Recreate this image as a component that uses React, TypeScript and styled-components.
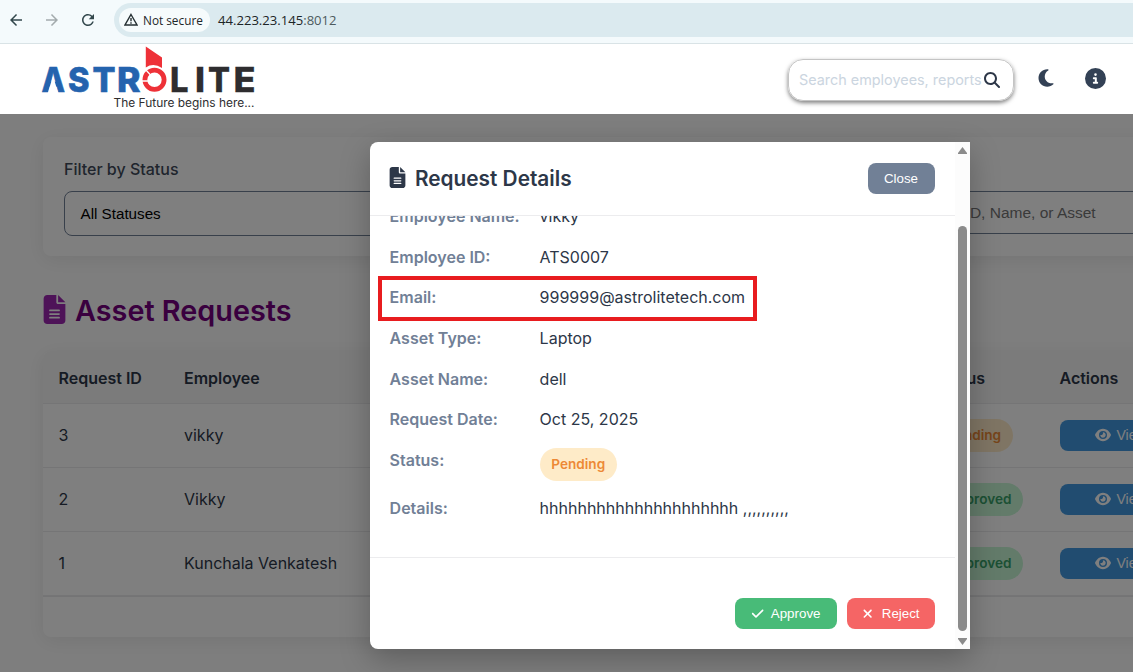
import React from "react";
import styled, { createGlobalStyle } from "styled-components";
import {
  FaCheck,
  FaCircleInfo,
  FaEye,
  FaFileLines,
  FaMagnifyingGlass,
  FaMoon,
  FaXmark,
} from "react-icons/fa6";
import { MdArrowBack, MdArrowForward, MdRefresh } from "react-icons/md";

const GlobalStyle = createGlobalStyle`
  * { box-sizing: border-box; }
  body {
    margin: 0;
    overflow: hidden;
    background: #f7fafc;
    color: #2d3748;
    font: 16px/1.6 Inter, sans-serif;
  }
`;

const Window = styled.div`
  position: relative;
  width: 1133px;
  height: 672px;
  overflow: hidden;
  background: #fdfdfd;
`;

const BrowserBar = styled.div`
  display: flex;
  align-items: center;
  height: 44px;
  padding: 0 0 4px 7px;
  background: #f4fafc;
  border-bottom: 1px solid #d9e3e6;
  color: #32474c;
`;

const NavIcon = styled.span<{ $dim?: boolean }>`
  display: flex;
  justify-content: center;
  width: 18px;
  margin-right: 18px;
  color: ${(p) => (p.$dim ? "#a3abad" : "#32474c")};
`;

const AddressBar = styled.div`
  display: flex;
  align-items: center;
  flex: 1;
  height: 34px;
  margin-left: -1px;
  padding-left: 5px;
  border-radius: 17px 0 0 17px;
  background: #dbeaef;
`;

const Security = styled.div`
  display: flex;
  align-items: center;
  gap: 5px;
  width: 91px;
  height: 24px;
  padding-left: 5px;
  border-radius: 12px;
  background: #f6fbfc;
  color: #1d2628;
  font: 500 11.8px/24px "Open Sans", sans-serif;
  white-space: nowrap;
`;

const Url = styled.span`
  margin-left: 8px;
  color: #1c2426;
  font: 13.1px/24px "Open Sans", sans-serif;
  span { color: #4d5a5d; }
`;

const Header = styled.header`
  display: flex;
  align-items: flex-start;
  width: 1133px;
  height: 70px;
  padding-left: 40px;
  background: #fff;
`;

const SearchBox = styled.div`
  display: flex;
  align-items: center;
  width: 226px;
  height: 42px;
  margin: 15px 22px 0 auto;
  padding: 0 0 0 10px;
  border: 1px solid #c4c4c4;
  border-radius: 15px;
  box-shadow: 0 2px 4px rgba(0, 0, 0, 0.5);
  color: #2d3748;
  font-size: 14.4px;
  svg { flex: none; margin: 0 0 1px 2px; }
`;

const Placeholder = styled.span`
  width: 183px;
  color: #cbd5e0;
  white-space: nowrap;
`;

const HeaderIcon = styled.span<{ $end: number }>`
  display: flex;
  height: 22px;
  margin: 23px ${(p) => p.$end}px 0 0;
  align-items: center;
  color: #334155;
`;

const Page = styled.main`
  display: flex;
  flex-direction: column;
  width: 1340px;
  padding: 23px 43px 0;
`;

const Card = styled.section`
  border-radius: 8px;
  background: #fff;
  box-shadow: 0 4px 20px rgba(0, 0, 0, 0.08);
`;

const FilterCard = styled(Card)`
  display: flex;
  justify-content: space-between;
  height: 119px;
  padding: 19px 21px;
`;

const Field = styled.div<{ $width: number }>`
  width: ${(p) => p.$width}px;
`;

const FieldLabel = styled.div`
  height: 35px;
  color: #3f4a5a;
  font-weight: 500;
  line-height: 26px;
`;

const Control = styled.div<{ $height: number; $color: string; $size: number }>`
  height: ${(p) => p.$height}px;
  padding-left: 15.5px;
  border: 1px solid #718096;
  border-radius: 8px;
  color: ${(p) => p.$color};
  font: ${(p) => p.$size}px/${(p) => p.$height - 2}px "Liberation Sans", Arial, sans-serif;
`;

const Title = styled.h1`
  display: flex;
  align-items: center;
  height: 48px;
  margin: 31px 0 16px;
  color: #74007e;
  font-size: 28.8px;
  font-weight: 600;
  svg { margin: -4px 6px 0 -3px; color: #9c27b0; }
`;

const TableCard = styled(Card)`
  height: 286px;
  overflow: hidden;
`;

const Row = styled.div<{ $head?: boolean }>`
  display: grid;
  grid-template-columns: 125.5px 751.5px 124px 140px;
  align-items: center;
  height: ${(p) => (p.$head ? 53 : 64)}px;
  padding: ${(p) => (p.$head ? 3 : 0)}px 0 0 15.5px;
  border-bottom: 1px solid #ebebec;
  background: ${(p) => (p.$head ? "#f7f7f7" : "#fff")};
  font-weight: ${(p) => (p.$head ? 600 : 400)};
`;

const TableEnd = styled.div`
  border-bottom: 1px solid #e8e8ea;
`;

const Badge = styled.span<{ $approved?: boolean }>`
  display: inline-block;
  height: 33px;
  padding: 0 11.7px;
  border-radius: 17px;
  background: ${(p) => (p.$approved ? "#c6f6d5" : "#feebc8")};
  color: ${(p) => (p.$approved ? "#38a169" : "#ed8936")};
  font-size: 13.6px;
  font-weight: 600;
  line-height: 33px;
`;

const Button = styled.button<{ $bg: string; $width: number }>`
  display: flex;
  align-items: center;
  justify-content: center;
  gap: 7px;
  width: ${(p) => p.$width}px;
  height: 31px;
  padding: 0 1px 0 0;
  border: 0;
  border-radius: 8px;
  background: ${(p) => p.$bg};
  color: #fff;
  font: 13.333px "Liberation Sans", Arial, sans-serif;
`;

const ViewButton = styled(Button)`
  gap: 5px;
  padding: 0 0 1px;
  font-size: 14px;
  line-height: 1;
`;

const Overlay = styled.div`
  position: absolute;
  top: 114px;
  left: 0;
  display: flex;
  justify-content: center;
  align-items: flex-start;
  width: 1340px;
  height: 558px;
  padding-top: 28px;
  background: rgba(0, 0, 0, 0.5);
`;

const Modal = styled.div`
  position: relative;
  display: flex;
  width: 600px;
  height: 507px;
  border-radius: 8px 0 0 8px;
  background: #fff;
  box-shadow: 0 10px 30px rgba(0, 0, 0, 0.25);
`;

const ModalMain = styled.div`
  display: flex;
  flex-direction: column;
  width: 585px;
`;

const ModalHeader = styled.div`
  display: flex;
  align-items: center;
  justify-content: space-between;
  height: 74px;
  padding: 0 20px;
  border-bottom: 1px solid #ececee;
`;

const ModalTitle = styled.h2`
  display: flex;
  align-items: center;
  gap: 7px;
  margin: 1px 0 0 -3px;
  font-size: 20.8px;
  font-weight: 600;
  svg { margin-top: -3px; }
`;

const ModalBody = styled.div`
  height: 342px;
  padding: 0 19.6px;
  overflow: hidden;
  border-bottom: 1px solid #ececee;
`;

const Details = styled.div`
  display: flex;
  flex-direction: column;
  gap: 15px;
  margin-top: -11.8px;
`;

const Detail = styled.div`
  display: flex;
  align-items: flex-start;
`;

const DetailLabel = styled.span`
  width: 150px;
  color: #718096;
  font-weight: 600;
`;

const ModalFooter = styled.div`
  display: flex;
  justify-content: flex-end;
  gap: 10px;
  padding: 40px 20px 0;
`;

const Scrollbar = styled.div`
  display: flex;
  flex-direction: column;
  align-items: center;
  width: 15px;
  padding: 5px 0 3px;
  background: #fcfcfc;
`;

const Thumb = styled.div`
  width: 9px;
  height: 405px;
  margin: 72px 0 7px;
  border-radius: 5px;
  background: #8b8b8b;
`;

const Highlight = styled.div`
  position: absolute;
  top: 134px;
  left: 8px;
  width: 379px;
  height: 45px;
  border: 4px solid #e81c1f;
`;

const Logo = () => (
  <svg width="216" height="70" viewBox="40 44 216 70" fontFamily="Inter, sans-serif">
    <g fontSize="34.4" fontWeight="800">
      <g fill="#2463ae" stroke="#2463ae" strokeWidth="0.6">
        <text x="41.500" y="92" textLength="23.500" lengthAdjust="spacingAndGlyphs">A</text>
        <path d="M53 76L47.800 93H58.200Z" fill="#fff" stroke="none" />
        <text x="68" y="92" textLength="21.500" lengthAdjust="spacingAndGlyphs">S</text>
        <text x="92.500" y="92" textLength="23" lengthAdjust="spacingAndGlyphs">T</text>
        <text x="117" y="92" textLength="23.500" lengthAdjust="spacingAndGlyphs">R</text>
      </g>
      <path d="M145.800 46.500L162 57.500V68Q153.500 62.500 145.800 67.500Z" fill="#ee3138" />
      <circle cx="154.500" cy="79.800" r="9.600" fill="none" stroke="#ee3138" strokeWidth="4.800" />
      <path d="M141 81H150M145 69L151.500 76" stroke="#fff" strokeWidth="1.300" />
      <g fill="#2e2d2f" stroke="#2e2d2f" strokeWidth="0.3">
        <text x="170" y="92" textLength="18.500" lengthAdjust="spacingAndGlyphs">L</text>
        <text x="195" y="92" textLength="10" lengthAdjust="spacingAndGlyphs">I</text>
        <text x="208" y="92" textLength="22" lengthAdjust="spacingAndGlyphs">T</text>
        <text x="233.500" y="92" textLength="22" lengthAdjust="spacingAndGlyphs">E</text>
      </g>
    </g>
    <text x="113.500" y="106.500" fontSize="11.500" fill="#2e2d2f" textLength="141" lengthAdjust="spacingAndGlyphs">
      The Future begins here...
    </text>
  </svg>
);

const WarningIcon = () => (
  <svg width="14" height="13" viewBox="0 0 14 13" fill="none" stroke="#263033" strokeWidth="1.4">
    <path d="M7 1.500L13 12H1Z" />
    <path d="M7 5V8.300M7 9.300V10.700" />
  </svg>
);

const requests = [
  { id: "3", employee: "vikky", approved: false },
  { id: "2", employee: "Vikky", approved: true },
  { id: "1", employee: "Kunchala Venkatesh", approved: true },
];

const details: [string, React.ReactNode][] = [
  ["Employee Name:", "vikky"],
  ["Employee ID:", "ATS0007"],
  ["Email:", "999999@astrolitetech.com"],
  ["Asset Type:", "Laptop"],
  ["Asset Name:", "dell"],
  ["Request Date:", "Oct 25, 2025"],
  ["Status:", <Badge key="status">Pending</Badge>],
  ["Details:", "hhhhhhhhhhhhhhhhhhhhh ,,,,,,,,,,"],
];

export default function App() {
  return (
    <Window>
      <GlobalStyle />
      <BrowserBar>
        <NavIcon><MdArrowBack size={18} /></NavIcon>
        <NavIcon $dim><MdArrowForward size={18} /></NavIcon>
        <NavIcon><MdRefresh size={18} /></NavIcon>
        <AddressBar>
          <Security><WarningIcon />Not secure</Security>
          <Url>44.223.23.145<span>:8012</span></Url>
        </AddressBar>
      </BrowserBar>
      <Header>
        <Logo />
        <SearchBox>
          <Placeholder>Search employees, reports</Placeholder>
          <FaMagnifyingGlass size={16} />
        </SearchBox>
        <HeaderIcon $end={29}><FaMoon size={20} /></HeaderIcon>
        <HeaderIcon $end={27}><FaCircleInfo size={21} /></HeaderIcon>
      </Header>
      <Page>
        <FilterCard>
          <Field $width={590}>
            <FieldLabel>Filter by Status</FieldLabel>
            <Control $height={45} $color="#000" $size={15.2}>All Statuses</Control>
          </Field>
          <Field $width={401}>
            <FieldLabel />
            <Control $height={43} $color="#757575" $size={15.5}>Search by ID, Name, or Asset</Control>
          </Field>
        </FilterCard>
        <Title><FaFileLines size={29} />Asset Requests</Title>
        <TableCard>
          <Row $head>
            <span>Request ID</span>
            <span>Employee</span>
            <span>Status</span>
            <span>Actions</span>
          </Row>
          {requests.map((r) => (
            <Row key={r.id}>
              <span>{r.id}</span>
              <span>{r.employee}</span>
              <span><Badge $approved={r.approved}>{r.approved ? "Approved" : "Pending"}</Badge></span>
              <ViewButton $bg="#4299e1" $width={123}><FaEye size={16} />View</ViewButton>
            </Row>
          ))}
          <TableEnd />
        </TableCard>
      </Page>
      <Overlay>
        <Modal>
          <ModalMain>
            <ModalHeader>
              <ModalTitle><FaFileLines size={21} />Request Details</ModalTitle>
              <Button $bg="#718096" $width={67}>Close</Button>
            </ModalHeader>
            <ModalBody>
              <Details>
                {details.map(([label, value]) => (
                  <Detail key={label}>
                    <DetailLabel>{label}</DetailLabel>
                    {value}
                  </Detail>
                ))}
              </Details>
            </ModalBody>
            <ModalFooter>
              <Button $bg="#48bb78" $width={102}><FaCheck size={13.3} />Approve</Button>
              <Button $bg="#f56565" $width={88}><FaXmark size={13.3} />Reject</Button>
            </ModalFooter>
          </ModalMain>
          <Scrollbar>
            <svg width="9" height="7" fill="#8b8b8b"><path d="M4.500 0L9 6V7H0V6Z" /></svg>
            <Thumb />
            <svg width="9" height="7" fill="#8b8b8b"><path d="M0 0H9V1L4.500 7L0 1Z" /></svg>
          </Scrollbar>
          <Highlight />
        </Modal>
      </Overlay>
    </Window>
  );
}
